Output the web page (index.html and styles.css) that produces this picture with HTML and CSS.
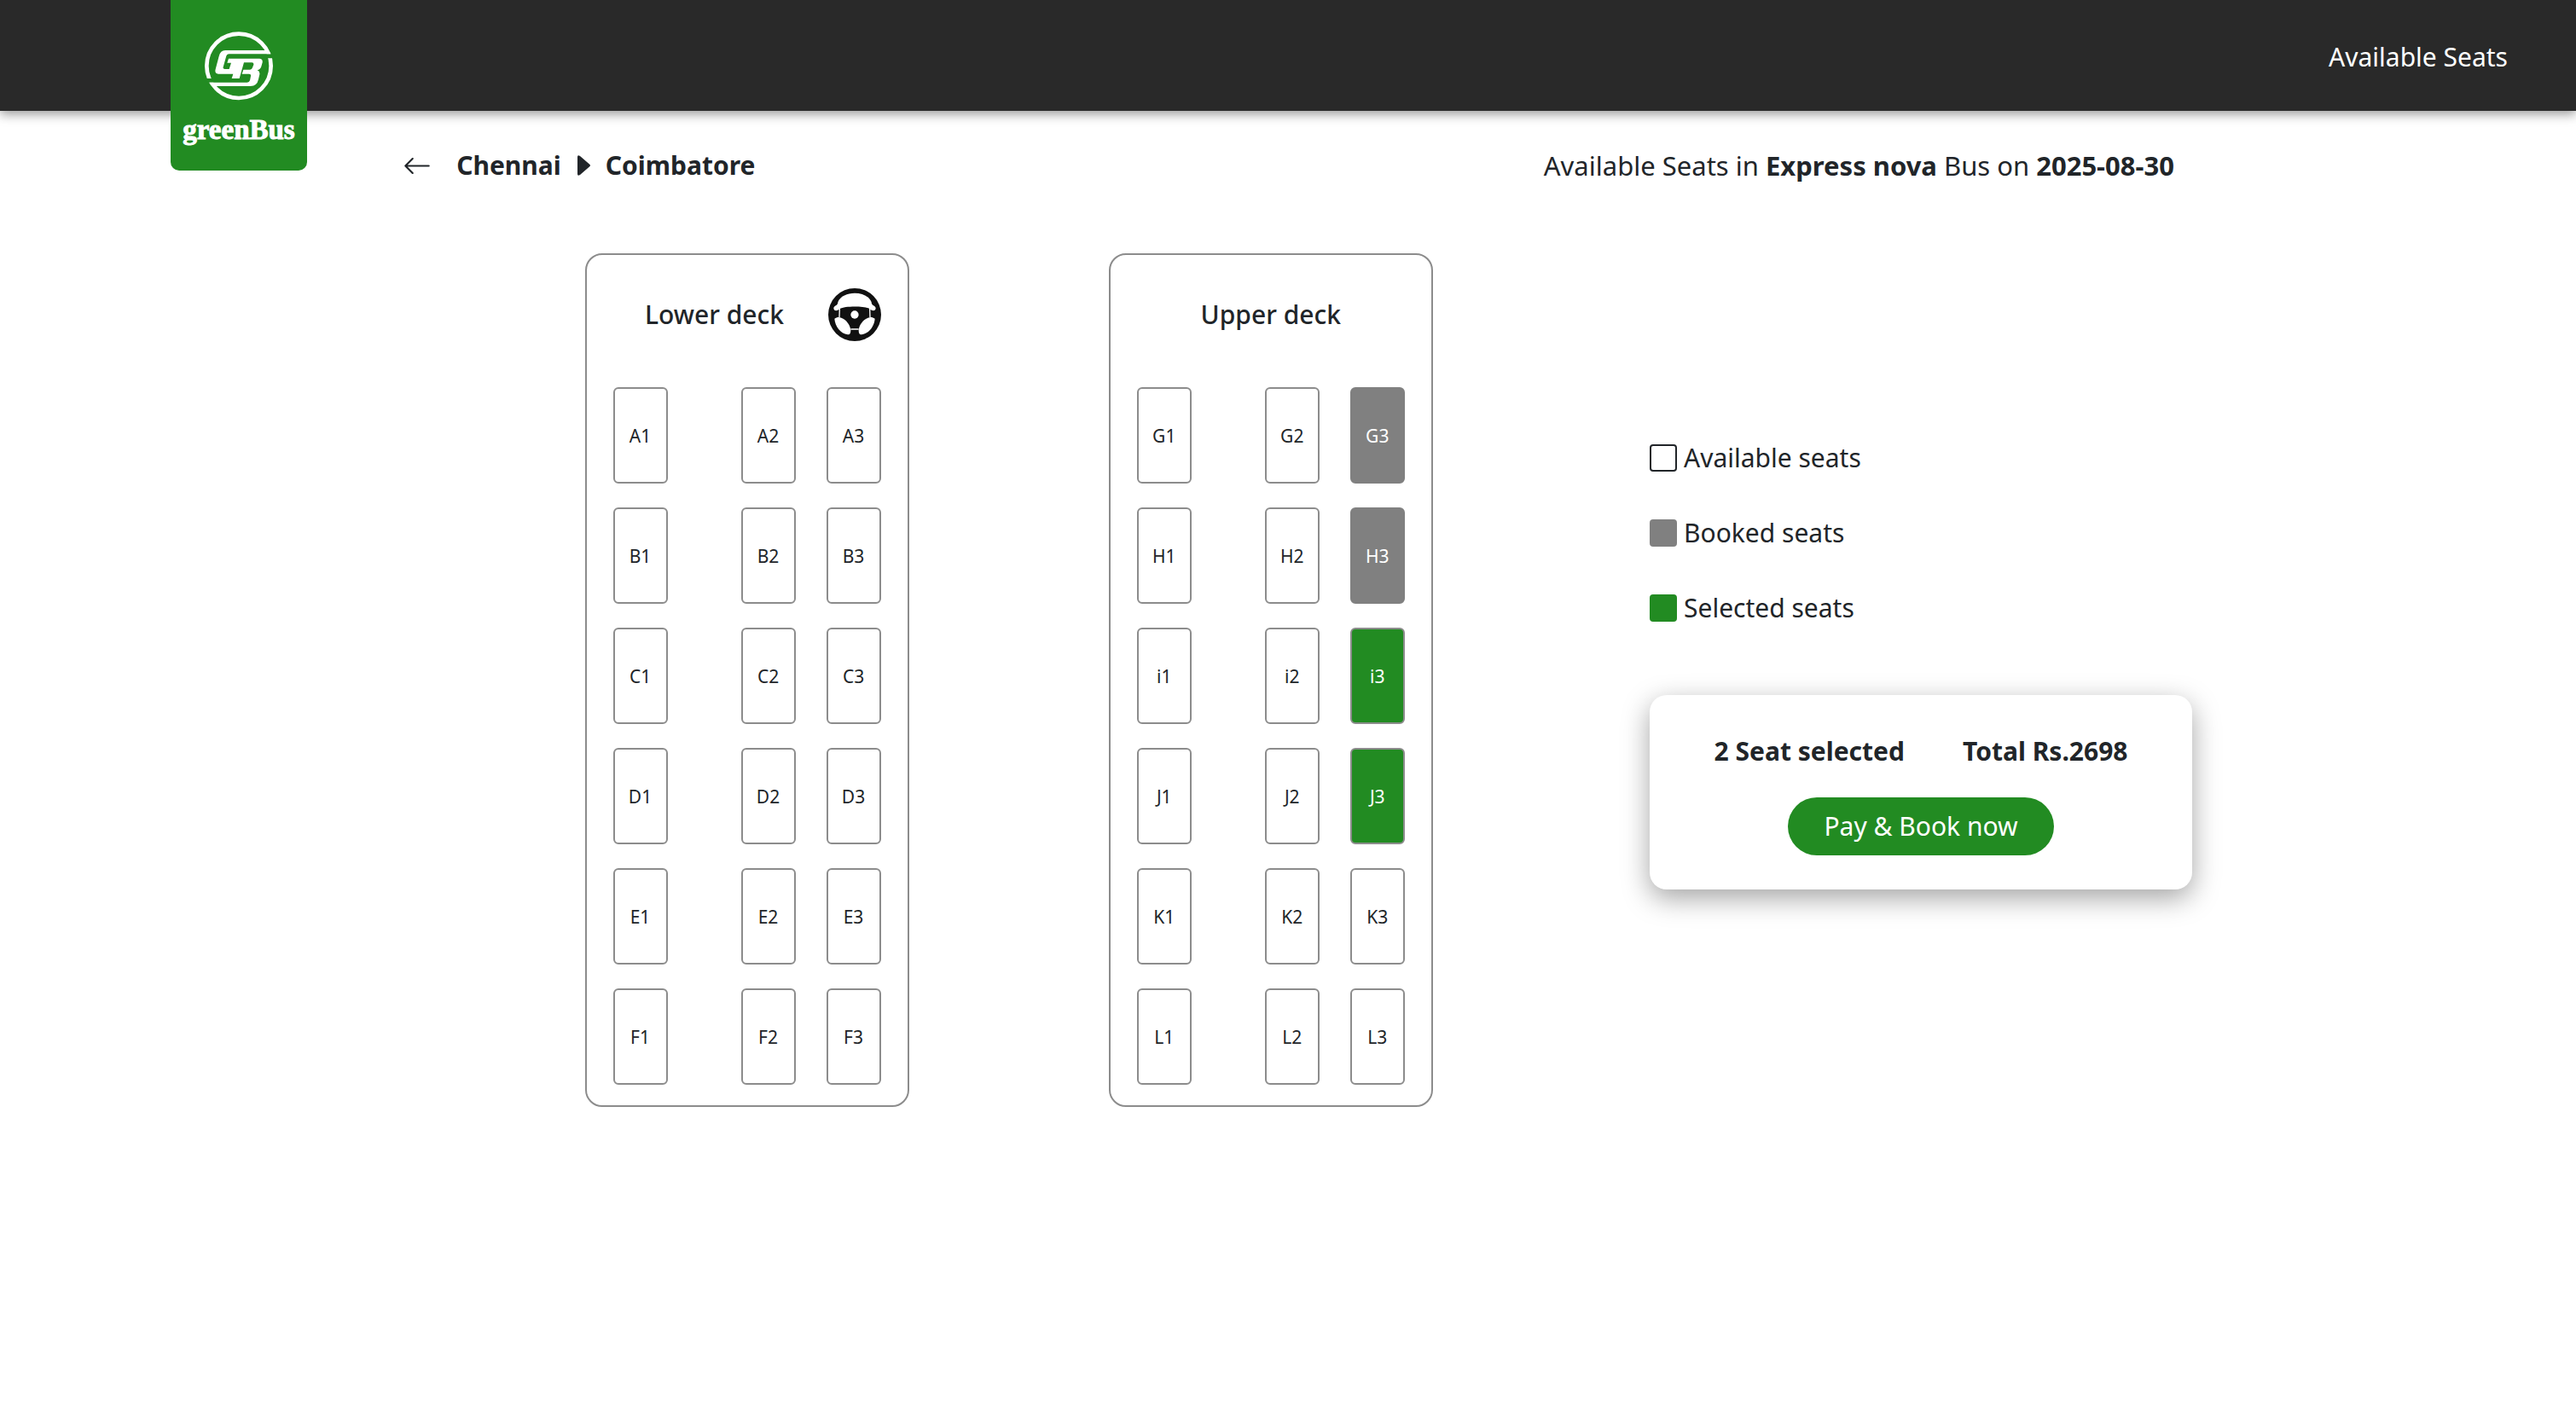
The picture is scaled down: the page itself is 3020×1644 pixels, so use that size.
FILE: index.html
```html
<!DOCTYPE html>
<html lang="en">
<head>
<meta charset="utf-8">
<meta name="viewport" content="width=device-width, initial-scale=1">
<title>greenBus - Available Seats</title>
<link rel="stylesheet" href="styles.css">
</head>
<body>
<header class="topbar">
  <a class="logo" href="#" aria-label="greenBus home">
    <svg class="logo-mark" viewBox="0 0 252 258" aria-hidden="true">
      <clipPath id="ring-gaps"><path d="M0 0H252V88H126V174H0ZM252 103H126V188H0V258H252Z"/></clipPath>
      <circle cx="126" cy="130" r="113" fill="none" stroke="#fff" stroke-width="14" clip-path="url(#ring-gaps)"/>
      <path d="M222 75L238 88H92Q84 88 81 98L71 134Q69 141 77 141H92L99 119H85L90 104H198Q211 104 209 118L205 132Q202 142 191 145Q201 149 199 160L195 177Q190 201 167 201H36L23 188H155Q163 188 165 181L168 166Q170 158 162 158H137L142 143H165Q172 143 174 136L178 125Q179 118 172 118H144L128 174H101L106 158H54Q40 157 44 142L56 96Q61 75 78 75Z"/>
    </svg>
    <span class="logo-name">greenBus</span>
  </a>
  <span class="topbar-title">Available Seats</span>
</header>

<main>
  <div class="route">
    <a class="back" href="#" aria-label="Back">
      <svg viewBox="0 0 28 18" fill="none" stroke="currentColor" stroke-width="2" stroke-linecap="round" stroke-linejoin="round" aria-hidden="true"><path d="M27 9H1M9 1 1 9l8 8"/></svg>
    </a>
    <div class="cities">
      <strong>Chennai</strong>
      <svg viewBox="0 0 16 24" fill="currentColor" aria-hidden="true"><path d="M1 2Q1-1 4 1L15 10.500Q17 12 15 13.500L4 23Q1 25 1 22Z"/></svg>
      <strong>Coimbatore</strong>
    </div>
    <p class="trip">Available Seats in <strong>Express nova</strong> Bus on <strong>2025-08-30</strong></p>
  </div>

  <div class="booking">
    <section class="deck deck-lower">
      <div class="deck-head">
        <h2>Lower deck</h2>
        <svg class="wheel" viewBox="62 56 186 186" aria-hidden="true">
          <circle cx="155" cy="149" r="93" fill="#111"/>
          <g fill="#fff">
            <path d="M81 126C82 116 96 119 96 105C112 63 198 63 214 105C214 119 228 116 229 126C229 138 214 136 207 128C190 118 120 118 103 128C96 136 81 138 81 126Z"/>
            <path d="M84 163C92 157 101 157 108 160C126 167 138 184 141 202C141 215 138 219 130 219C105 215 86 190 84 163Z"/>
            <path d="M226 163C218 157 209 157 202 160C184 167 172 184 169 202C169 215 172 219 180 219C205 215 224 190 226 163Z"/>
            <circle cx="155" cy="149" r="14"/>
          </g>
          <path d="M141 200H169M102 128L101 158M208 128L209 158" stroke="#fff" stroke-width="4" fill="none"/>
        </svg>
      </div>
      <div class="seats">
        <button class="seat">A1</button><button class="seat">A2</button><button class="seat">A3</button>
        <button class="seat">B1</button><button class="seat">B2</button><button class="seat">B3</button>
        <button class="seat">C1</button><button class="seat">C2</button><button class="seat">C3</button>
        <button class="seat">D1</button><button class="seat">D2</button><button class="seat">D3</button>
        <button class="seat">E1</button><button class="seat">E2</button><button class="seat">E3</button>
        <button class="seat">F1</button><button class="seat">F2</button><button class="seat">F3</button>
      </div>
    </section>

    <section class="deck deck-upper">
      <div class="deck-head">
        <h2>Upper deck</h2>
      </div>
      <div class="seats">
        <button class="seat">G1</button><button class="seat">G2</button><button class="seat booked" disabled>G3</button>
        <button class="seat">H1</button><button class="seat">H2</button><button class="seat booked" disabled>H3</button>
        <button class="seat">i1</button><button class="seat">i2</button><button class="seat selected" aria-pressed="true">i3</button>
        <button class="seat">J1</button><button class="seat">J2</button><button class="seat selected" aria-pressed="true">J3</button>
        <button class="seat">K1</button><button class="seat">K2</button><button class="seat">K3</button>
        <button class="seat">L1</button><button class="seat">L2</button><button class="seat">L3</button>
      </div>
    </section>

    <aside class="side">
      <ul class="legend">
        <li><span class="swatch"></span>Available seats</li>
        <li><span class="swatch swatch-booked"></span>Booked seats</li>
        <li><span class="swatch swatch-selected"></span>Selected seats</li>
      </ul>
      <div class="summary">
        <div class="totals"><strong>2 Seat selected</strong><strong>Total Rs.2698</strong></div>
        <button class="pay">Pay &amp; Book now</button>
      </div>
    </aside>
  </div>
</main>
</body>
</html>
```

FILE: styles.css
```css
* {
  box-sizing: border-box;
}

body {
  margin: 0;
  background: #fff;
  color: #212529;
  font-family: "Noto Sans", "Open Sans", sans-serif;
  font-size: 30px;
  line-height: 40px;
}

button {
  font: inherit;
  cursor: pointer;
}

/* Top bar */
.topbar {
  position: relative;
  display: flex;
  align-items: center;
  justify-content: flex-end;
  height: 130px;
  padding: 4px 80px 0;
  background: #292929;
  color: #fff;
  box-shadow: 0 4px 12px rgba(0, 0, 0, 0.4);
}

.logo {
  position: absolute;
  top: 0;
  left: 200px;
  display: flex;
  flex-direction: column;
  align-items: center;
  width: 160px;
  height: 200px;
  padding-top: 34px;
  border-radius: 0 0 10px 10px;
  background: #228b22;
  color: #fff;
  text-decoration: none;
}

.logo-mark {
  width: 84px;
  height: 86px;
  fill: #fff;
}

.logo-name {
  font: 700 33px/64px "Liberation Serif", serif;
  -webkit-text-stroke: 1px #fff;
}

/* Route line */
.route {
  display: flex;
  align-items: center;
  padding: 44px 15.6% 0 15.7%;
}

.back {
  display: flex;
  margin-right: 31px;
  color: inherit;
}

.back svg {
  width: 30px;
  height: 19px;
}

.cities {
  display: flex;
  align-items: center;
  gap: 18px;
}

.cities svg {
  width: 16px;
  height: 24px;
}

.trip {
  margin: 0 0 0 auto;
  font-size: 31px;
}

/* Decks and side column */
.booking {
  display: grid;
  grid-template-columns: 380px 234fr 380px 254fr 636px;
  align-items: start;
  padding: 83px 14.9% 60px 22.7%;
}

.deck {
  padding: 39px 31px 24px;
  border: 2px solid #8c8c8c;
  border-radius: 20px;
}

.deck-upper {
  grid-column: 3;
}

.deck-head {
  display: flex;
  align-items: center;
  gap: 14px;
  height: 62px;
  margin-bottom: 54px;
}

.deck-head h2 {
  flex: 1;
  margin: 0;
  font-size: inherit;
  font-weight: 500;
  text-align: center;
}

.wheel {
  width: 62px;
  height: 62px;
}

.seats {
  display: grid;
  grid-template-columns: 114px 64px 64px;
  gap: 28px 36px;
}

.seat {
  width: 64px;
  height: 113px;
  padding: 0;
  border: 2px solid #8c8c8c;
  border-radius: 6px;
  background: #fff;
  color: inherit;
  font-size: 21px;
}

.booked {
  border-color: #808080;
  background: #808080;
  color: #fff;
}

.selected {
  background: #228b22;
  color: #fff;
}

.side {
  grid-column: 5;
  padding-top: 220px;
}

.legend {
  display: grid;
  gap: 48px;
  margin: 0 0 82px;
  padding: 0;
  list-style: none;
}

.legend li {
  display: flex;
  align-items: center;
  gap: 8px;
}

.swatch {
  width: 32px;
  height: 32px;
  border: 2px solid #212529;
  border-radius: 4px;
}

.swatch-booked {
  border-color: #808080;
  background: #808080;
}

.swatch-selected {
  border-color: #228b22;
  background: #228b22;
}

.summary {
  display: flex;
  flex-direction: column;
  align-items: center;
  gap: 34px;
  padding: 46px 24px 40px;
  border-radius: 20px;
  background: #fff;
  box-shadow: 0 10px 32px rgba(0, 0, 0, 0.36);
}

.totals {
  display: flex;
  gap: 68px;
}

.pay {
  height: 68px;
  padding: 0 42px;
  border: 0;
  border-radius: 34px;
  background: #228b22;
  color: #fff;
}
```
